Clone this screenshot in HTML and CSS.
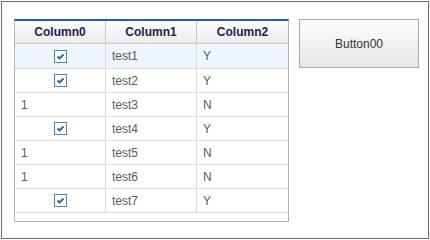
FILE: index.html
```html
<!DOCTYPE html>
<html>
<head>
    <title>Grid Form</title>
    <link rel="stylesheet" href="styles.css">
</head>
<body>
    <div class="frame">
        <div class="grid">
            <div class="row head">
                <div class="cell">Column0</div>
                <div class="cell">Column1</div>
                <div class="cell">Column2</div>
            </div>
            <div class="row first selected">
                <div class="cell center"><span class="check"><svg width="11" height="11" viewBox="0 0 11 11"><path d="M2.5 5.5 L4.5 7.5 L8.5 3.5" fill="none" stroke="#1f5cb3" stroke-width="1.8"/></svg></span></div>
                <div class="cell">test1</div>
                <div class="cell">Y</div>
            </div>
            <div class="row">
                <div class="cell center"><span class="check"><svg width="11" height="11" viewBox="0 0 11 11"><path d="M2.5 5.5 L4.5 7.5 L8.5 3.5" fill="none" stroke="#1f5cb3" stroke-width="1.8"/></svg></span></div>
                <div class="cell">test2</div>
                <div class="cell">Y</div>
            </div>
            <div class="row">
                <div class="cell">1</div>
                <div class="cell">test3</div>
                <div class="cell">N</div>
            </div>
            <div class="row">
                <div class="cell center"><span class="check"><svg width="11" height="11" viewBox="0 0 11 11"><path d="M2.5 5.5 L4.5 7.5 L8.5 3.5" fill="none" stroke="#1f5cb3" stroke-width="1.8"/></svg></span></div>
                <div class="cell">test4</div>
                <div class="cell">Y</div>
            </div>
            <div class="row">
                <div class="cell">1</div>
                <div class="cell">test5</div>
                <div class="cell">N</div>
            </div>
            <div class="row">
                <div class="cell">1</div>
                <div class="cell">test6</div>
                <div class="cell">N</div>
            </div>
            <div class="row">
                <div class="cell center"><span class="check"><svg width="11" height="11" viewBox="0 0 11 11"><path d="M2.5 5.5 L4.5 7.5 L8.5 3.5" fill="none" stroke="#1f5cb3" stroke-width="1.8"/></svg></span></div>
                <div class="cell">test7</div>
                <div class="cell">Y</div>
            </div>
        </div>
        <button class="btn">Button00</button>
    </div>
</body>
</html>
```

FILE: styles.css
```css
body {
    margin: 1px;
    font-family: "Liberation Sans", Arial, sans-serif;
    background-color: #ffffff;
}
.frame {
    width: 428px;
    height: 238px;
    box-sizing: border-box;
    border: 1px solid #6a6a6a;
    padding: 17px 0 0 12px;
    display: flex;
    align-items: flex-start;
    gap: 10px;
}
.grid {
    width: 275px;
    height: 203px;
    box-sizing: border-box;
    border: 1px solid #b4b4b4;
    border-top: 2px solid #1f5cb3;
}
.row {
    display: grid;
    grid-template-columns: 91px 91px 91px;
    height: 24px;
    box-sizing: border-box;
    border-bottom: 1px solid #d8dce2;
    font-size: 12px;
    color: #5a5a5a;
}
.row.first {
    height: 25px;
}
.row.selected {
    background-color: #eef5fd;
}
.row.head {
    height: 23px;
    background: linear-gradient(#fdfdfd, #ebebeb);
    border-bottom: 1px solid #c8c8c8;
    font-weight: bold;
    color: #24204f;
}
.cell {
    display: flex;
    align-items: center;
    padding-left: 6px;
    border-right: 1px solid #d8dce2;
}
.cell:last-child {
    border-right: none;
}
.head .cell {
    justify-content: center;
    padding-left: 0;
    border-right-color: #c8c8c8;
}
.cell.center {
    justify-content: center;
    padding-left: 0;
}
.check {
    width: 13px;
    height: 13px;
    box-sizing: border-box;
    border: 1px solid #4a82c8;
    background-color: #ffffff;
    display: flex;
    align-items: center;
    justify-content: center;
}
.btn {
    width: 120px;
    height: 49px;
    margin: 0;
    padding: 0;
    border: 1px solid #a8a8a8;
    background: linear-gradient(#fefefe, #e6e6e6);
    font-family: "Liberation Sans", Arial, sans-serif;
    font-size: 12px;
    color: #333333;
}
```
